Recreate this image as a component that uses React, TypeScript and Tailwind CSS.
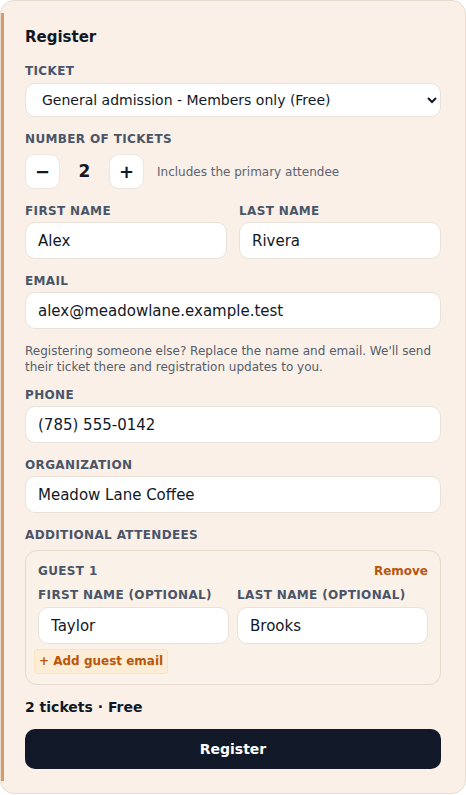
import { useState } from "react";

// Small uppercase field label
function Label({ children, className = "" }: { children: React.ReactNode; className?: string }) {
  return (
    <div className={`text-[12px] leading-4 font-bold uppercase tracking-[0.03em] text-[#4a5568] ${className}`}>
      {children}
    </div>
  );
}

function TextInput({ value, onChange }: { value: string; onChange: (v: string) => void }) {
  return (
    <input
      value={value}
      onChange={(e) => onChange(e.target.value)}
      className="w-full h-[37px] rounded-[10px] border border-[#e8e2db] bg-white px-3 text-[15px] text-[#111827] outline-none"
    />
  );
}

export default function App() {
  const [qty, setQty] = useState(2);
  const [first, setFirst] = useState("Alex");
  const [last, setLast] = useState("Rivera");
  const [email, setEmail] = useState("alex@meadowlane.example.test");
  const [phone, setPhone] = useState("(785) 555-0142");
  const [org, setOrg] = useState("Meadow Lane Coffee");
  const [gFirst, setGFirst] = useState("Taylor");
  const [gLast, setGLast] = useState("Brooks");

  return (
    <div className="min-h-[795px] w-[466px] bg-white font-['DejaVu_Sans',sans-serif]">
      <div className="relative flex flex-col rounded-[14px] border border-[#e7dccf] bg-[#faf0e7] px-6 pt-[26px] pb-6">
        {/* accent bar on the left edge */}
        <div className="absolute left-0 top-[12px] bottom-[12px] w-[3px] bg-[#d39a6c]" />

        <h2 className="text-[15px] leading-5 font-bold text-[#111827]">Register</h2>

        <Label className="mt-[16px]">Ticket</Label>
        <select className="mt-[4px] h-[34px] w-full rounded-[10px] border border-[#e8e2db] bg-white pl-3 pr-2 text-[14px] text-[#111827] outline-none">
          <option>General admission - Members only (Free)</option>
        </select>

        <Label className="mt-[14px]">Number of tickets</Label>
        <div className="mt-[7px] flex items-center">
          <button
            onClick={() => setQty(Math.max(1, qty - 1))}
            className="flex h-[35px] w-[35px] items-center justify-center rounded-[10px] border border-[#ece6df] bg-white text-[18px] font-bold text-[#111827]"
          >
            −
          </button>
          <span className="w-[49px] text-center text-[17px] font-bold text-[#111827]">{qty}</span>
          <button
            onClick={() => setQty(qty + 1)}
            className="flex h-[35px] w-[35px] items-center justify-center rounded-[10px] border border-[#ece6df] bg-white text-[18px] font-bold text-[#111827]"
          >
            +
          </button>
          <span className="ml-[13px] text-[12px] text-[#5b6472]">Includes the primary attendee</span>
        </div>

        <div className="mt-[14px] grid grid-cols-2 gap-3">
          <div>
            <Label>First name</Label>
            <div className="mt-[3px]">
              <TextInput value={first} onChange={setFirst} />
            </div>
          </div>
          <div>
            <Label>Last name</Label>
            <div className="mt-[3px]">
              <TextInput value={last} onChange={setLast} />
            </div>
          </div>
        </div>

        <Label className="mt-[14px]">Email</Label>
        <div className="mt-[3px]">
          <TextInput value={email} onChange={setEmail} />
        </div>
        <p className="mt-[14px] text-[12px] leading-4 text-[#555d6b]">
          Registering someone else? Replace the name and email. We'll send their ticket there and registration updates to you.
        </p>

        <Label className="mt-[12px]">Phone</Label>
        <div className="mt-[3px]">
          <TextInput value={phone} onChange={setPhone} />
        </div>

        <Label className="mt-[14px]">Organization</Label>
        <div className="mt-[3px]">
          <TextInput value={org} onChange={setOrg} />
        </div>

        <Label className="mt-[14px]">Additional attendees</Label>
        <div className="mt-[7px] rounded-[12px] border border-[#e6dacd] bg-[#faf1e8] px-3 pt-3 pb-[10px]">
          <div className="flex items-center justify-between">
            <Label>Guest 1</Label>
            <button className="text-[12px] leading-4 font-bold text-[#b9560c]">Remove</button>
          </div>
          <div className="mt-[8px] grid grid-cols-2 gap-2">
            <div>
              <Label>First name (optional)</Label>
              <div className="mt-[4px]">
                <TextInput value={gFirst} onChange={setGFirst} />
              </div>
            </div>
            <div>
              <Label>Last name (optional)</Label>
              <div className="mt-[4px]">
                <TextInput value={gLast} onChange={setGLast} />
              </div>
            </div>
          </div>
          <div className="mt-[5px] flex">
            <button className="-ml-1 rounded-[3px] border border-[#fbe3c0] bg-[#fdedd6] px-1 py-[4px] text-[12px] leading-[15px] font-bold text-[#b9560c]">
              + Add guest email
            </button>
          </div>
        </div>

        <div className="mt-[12px] text-[14px] leading-5 font-bold text-[#111827]">2 tickets · Free</div>

        <button className="mt-[12px] h-[40px] w-full rounded-[10px] bg-[#111827] text-[14px] font-bold text-white">
          Register
        </button>
      </div>
    </div>
  );
}
